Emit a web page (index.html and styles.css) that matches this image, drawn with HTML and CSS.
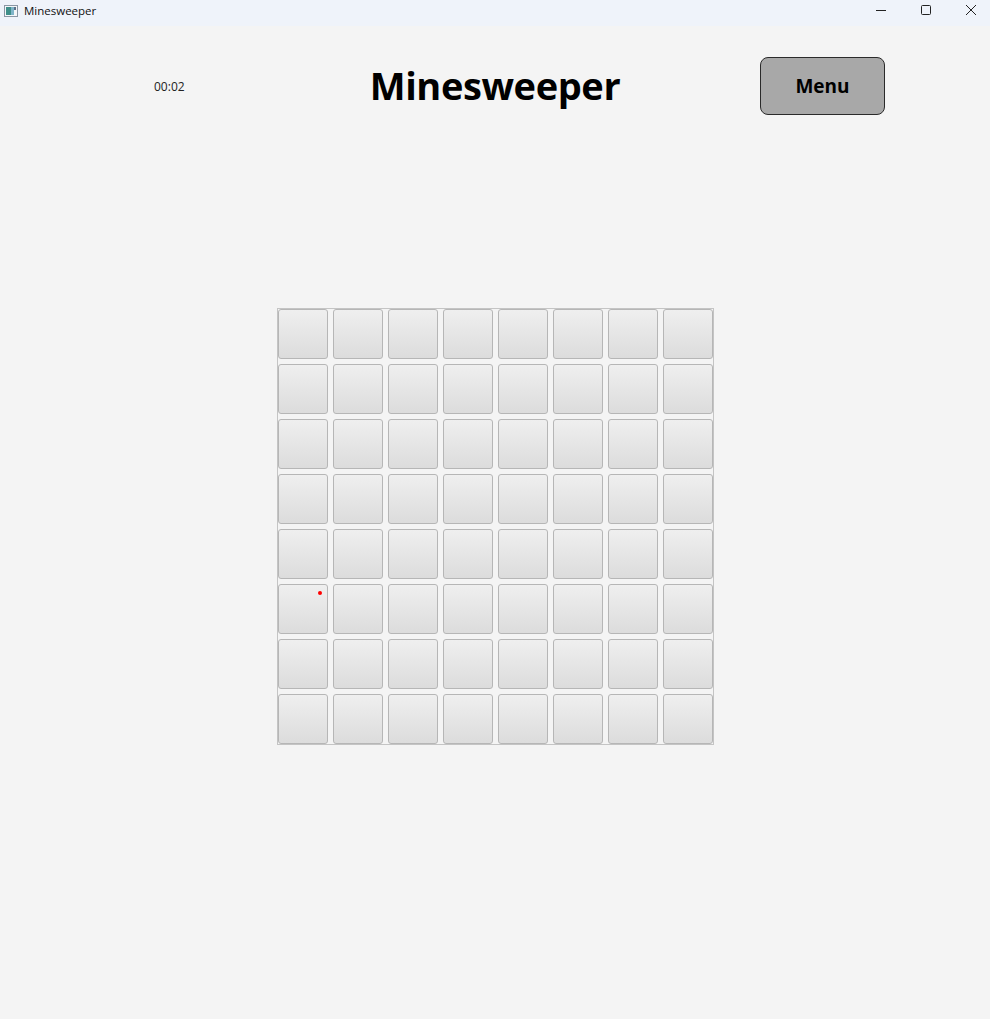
FILE: index.html
```html
<!DOCTYPE html>
<html lang="en">
<head>
<meta charset="UTF-8">
<meta name="viewport" content="width=device-width, initial-scale=1.0">
<title>Minesweeper</title>
<link rel="stylesheet" href="styles.css">
</head>
<body>
<div class="titlebar">
    <div class="app-name">
        <svg class="app-icon" width="14" height="12" viewBox="0 0 14 12">
            <rect x="0.5" y="0.5" width="13" height="11" fill="#f4f6f8" stroke="#8a96a4"/>
            <rect x="2" y="2" width="5" height="8" fill="#3f8f8a"/>
            <rect x="7" y="2" width="3" height="8" fill="#7fb4c9"/>
            <rect x="10" y="2" width="2" height="3" fill="#5b6f86"/>
        </svg>
        <span>Minesweeper</span>
    </div>
    <div class="controls">
        <svg width="45" height="26" viewBox="0 0 45 26"><path d="M21 10.5h10" stroke="#222" stroke-width="1"/></svg>
        <svg width="45" height="26" viewBox="0 0 45 26"><rect x="21.5" y="5.5" width="9" height="9" rx="1" fill="none" stroke="#222" stroke-width="1"/></svg>
        <svg width="45" height="26" viewBox="0 0 45 26"><path d="M21 5l10 10M31 5l-10 10" stroke="#222" stroke-width="1"/></svg>
    </div>
</div>

<div class="header">
    <div class="timer">00:02</div>
    <h1>Minesweeper</h1>
    <div class="menu-wrap"><button class="menu-btn">Menu</button></div>
</div>

<!-- 8x8 board, filled in by the script below -->
<div class="board" id="board"></div>

<script>
    let board = document.getElementById('board');
    for (let r = 0; r < 8; r++) {
        for (let c = 0; c < 8; c++) {
            let cell = document.createElement('div');
            cell.className = 'cell';
            if (r === 5 && c === 0) {
                let mark = document.createElement('span');
                mark.className = 'mark';
                cell.appendChild(mark);
            }
            board.appendChild(cell);
        }
    }
</script>
</body>
</html>
```

FILE: styles.css
```css
body {
    margin: 0;
    background-color: #f4f4f4;
    font-family: "Open Sans", "Noto Sans", sans-serif;
    height: 1019px;
}

.titlebar {
    height: 26px;
    background-color: #eff3fa;
    display: flex;
    justify-content: space-between;
    align-items: flex-start;
}

.app-name {
    display: flex;
    align-items: center;
    height: 21px;
    padding-left: 4px;
    font-size: 11.5px;
    color: #111;
}

.app-icon {
    margin-right: 6px;
}

.controls {
    display: flex;
}

.controls svg {
    display: block;
}

.header {
    display: grid;
    grid-template-columns: 1fr auto 1fr;
    align-items: center;
    margin-top: 31px;
    height: 58px;
}

.timer {
    padding-left: 154px;
    font-size: 12px;
    color: #222;
}

h1 {
    margin: 0;
    font-size: 38px;
    font-weight: 700;
    color: #000;
    letter-spacing: -0.4px;
    line-height: 1;
    padding-bottom: 2px;
}

.menu-wrap {
    display: flex;
    justify-content: flex-end;
    padding-right: 105px;
}

.menu-btn {
    width: 125px;
    height: 58px;
    background-color: #a8a8a8;
    border: 1px solid #2a2a2a;
    border-radius: 8px;
    font-family: "Open Sans", "Noto Sans", sans-serif;
    font-size: 19px;
    font-weight: 700;
    color: #000;
}

.board {
    width: 435px;
    margin: 193px auto 0;
    border: 1px solid #c4c4c4;
    display: grid;
    grid-template-columns: repeat(8, 50px);
    grid-template-rows: repeat(8, 50px);
    gap: 5px;
}

.cell {
    box-sizing: border-box;
    border: 1px solid #b6b6b6;
    border-radius: 3px;
    background: linear-gradient(#efefef, #dcdcdc);
    position: relative;
}

.mark {
    position: absolute;
    left: 39px;
    top: 6px;
    width: 4px;
    height: 4px;
    border-radius: 50%;
    background-color: #ff0000;
}
```
